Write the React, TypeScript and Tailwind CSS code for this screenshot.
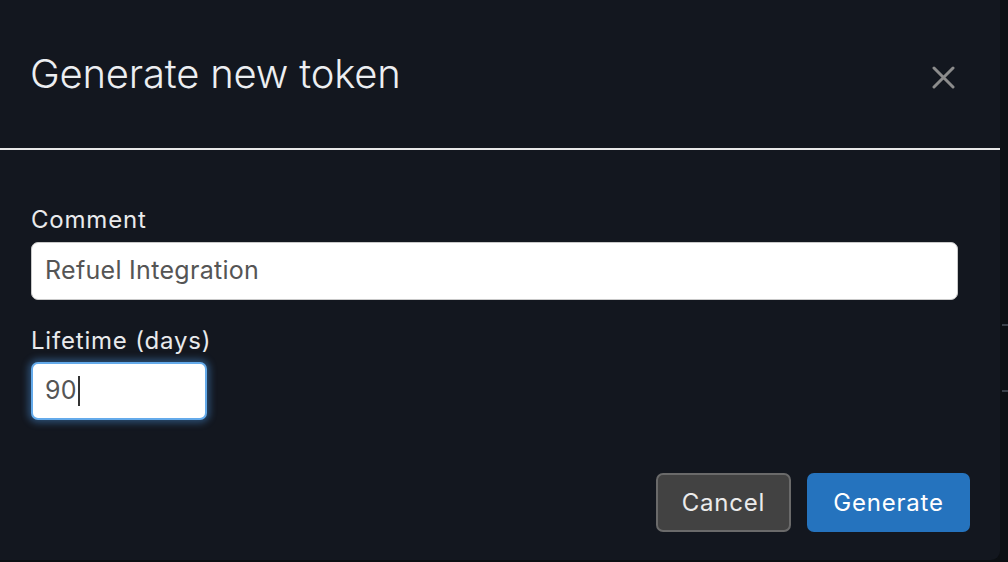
import React from "react";

export default function App() {
  const font = { fontFamily: "Inter, 'Noto Sans', sans-serif" };
  return (
    <div
      className="w-[1008px] h-[562px] bg-[#0c0f13] flex overflow-hidden"
      style={font}
    >
      <div className="w-[1000px] h-[560px] bg-[#13171f] rounded-br-[9px] flex flex-col shrink-0">
        {/* header */}
        <div className="h-[150px] border-b-2 border-[#e8e8e8] flex items-center justify-between pl-[30px] pr-[45px] shrink-0">
          <h1 className="text-[40px] font-light text-[#eceef1] tracking-[-0.2px] leading-none">
            Generate new token
          </h1>
          <svg width="23" height="23" viewBox="0 0 23 23" className="mt-[6px]">
            <path
              d="M2 2 L21 21 M21 2 L2 21"
              stroke="#8c8c8c"
              strokeWidth="3"
              strokeLinecap="round"
            />
          </svg>
        </div>

        {/* body */}
        <div className="pt-[53px] pl-[31px] pr-[42px] flex flex-col">
          <label className="text-[24px] tracking-[0.8px] leading-[34px] text-[#e9eaec] mb-[5px]">
            Comment
          </label>
          <div className="h-[58px] w-[927px] bg-white border border-[#c9c9c9] rounded-[7px] flex items-center px-[13px] text-[25px] tracking-[0.3px] text-[#555555]">
            Refuel Integration
          </div>

          <label className="text-[24px] tracking-[0.8px] leading-[34px] text-[#e9eaec] mt-[24px] mb-[4px]">
            Lifetime (days)
          </label>
          <div className="h-[58px] w-[176px] bg-white border-2 border-[#64aaea] rounded-[7px] flex items-center px-[12px] text-[25px] tracking-[0.3px] text-[#555555] shadow-[0_0_7px_3px_rgba(70,140,210,0.45)]">
            <span>90</span>
            <span className="inline-block w-[2px] h-[30px] bg-[#333] ml-[1px]" />
          </div>
        </div>

        {/* footer */}
        <div className="flex justify-end gap-[16px] pr-[30px] mt-[53px]">
          <button className="h-[59px] w-[135px] rounded-[7px] bg-[#424242] border-2 border-[#6a6a6a] text-[24px] tracking-[0.8px] text-[#ebebeb]">
            Cancel
          </button>
          <button className="h-[59px] w-[163px] rounded-[7px] bg-[#2573be] text-[24px] tracking-[0.8px] text-white">
            Generate
          </button>
        </div>
      </div>

      {/* background strip on the right */}
      <div className="flex-1 flex flex-col">
        <div className="h-[324px]" />
        <div className="h-[2px] ml-[2px] bg-[#3a4049]" />
        <div className="h-[64px]" />
        <div className="h-[2px] ml-[2px] bg-[#3a4049]" />
      </div>
    </div>
  );
}
